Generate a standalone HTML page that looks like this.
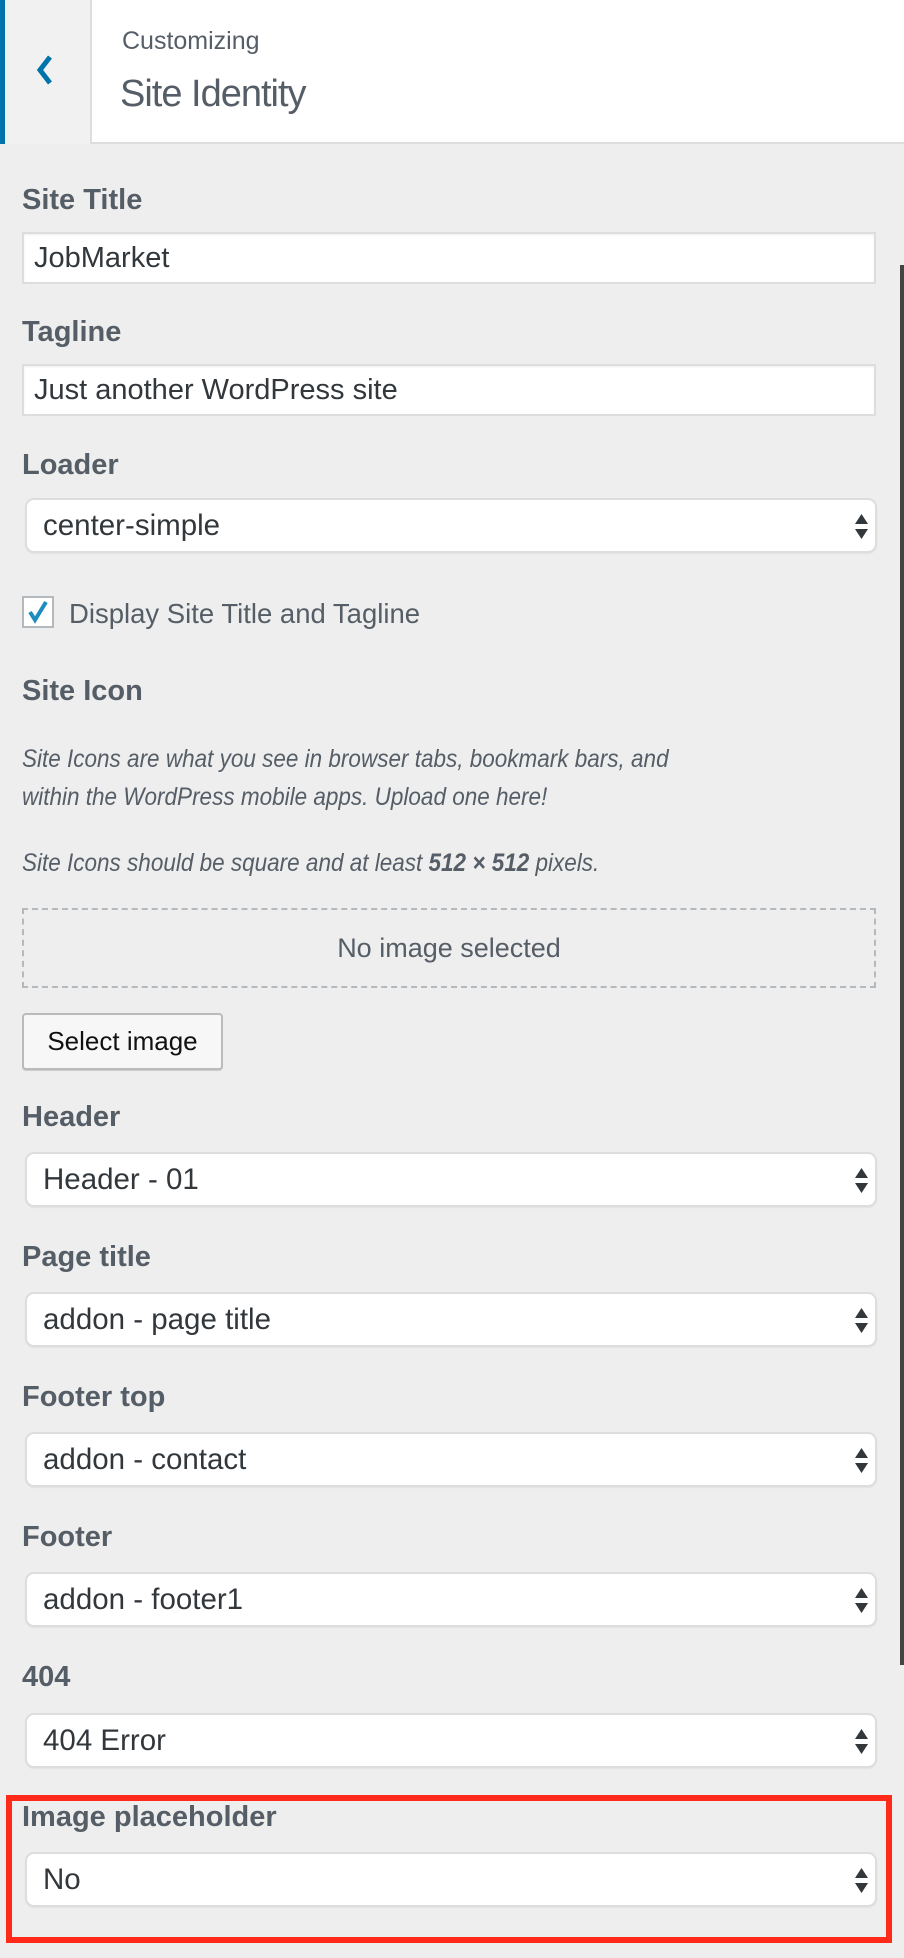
<!DOCTYPE html>
<html><head><meta charset="utf-8"><style>
*{margin:0;padding:0;box-sizing:border-box}
html,body{width:904px;height:1958px;overflow:hidden;background:#eeeeee;font-family:"Liberation Sans",sans-serif}
.a{position:absolute;white-space:nowrap}
.lbl{font-size:29px;font-weight:bold;color:#555d66;line-height:29px;left:22px}
.inp{left:22px;width:854px;height:52px;background:#fff;border:2px solid #ddd;font-size:29px;color:#32373c;line-height:48px;padding-left:10px;box-shadow:inset 0 1px 2px rgba(0,0,0,.07)}
.sel{left:25px;width:852px;height:55px;background:#fff;border:2px solid #ddd;border-radius:9px;font-size:29.5px;color:#32373c;line-height:51px;padding-left:16px;box-shadow:0 1px 1px rgba(0,0,0,.05)}
.arr{position:absolute;right:7px;top:14px;width:13px;height:25px}
.it{font-style:italic;color:#555d66;font-size:25px;transform-origin:0 0;transform:scaleX(0.9)}
</style></head><body>
<div class="a" style="left:0;top:0;width:904px;height:144px;background:#fff;border-bottom:2px solid #ddd"></div>
<div class="a" style="left:0;top:0;width:92px;height:144px;background:#f1f1f1;border-right:2px solid #ddd"></div>
<div class="a" style="left:0;top:0;width:5px;height:144px;background:#0073aa"></div>
<svg class="a" style="left:34px;top:54px" width="22" height="32" viewBox="0 0 22 32"><path d="M16 3 L6 16 L16 29" fill="none" stroke="#0073aa" stroke-width="5"/></svg>
<div class="a" style="left:122px;top:29px;font-size:25px;line-height:25px;color:#555d66">Customizing</div>
<div class="a" style="left:120px;top:75px;font-size:38px;line-height:38px;color:#555d66;font-weight:300;letter-spacing:-1px">Site Identity</div>
<div class="a" style="left:900px;top:265px;width:4px;height:1400px;background:#444"></div>

<div class="a lbl" style="top:186px">Site Title</div>
<div class="a inp" style="top:232px">JobMarket</div>
<div class="a lbl" style="top:318px">Tagline</div>
<div class="a inp" style="top:364px">Just another WordPress site</div>

<div class="a lbl" style="top:451px">Loader</div>
<div class="a sel" style="top:498px">center-simple<svg class="arr" viewBox="0 0 13 25"><path d="M6.5 0 L13 10 L0 10Z M0 15 L13 15 L6.5 25Z" fill="#32373c"/></svg></div>

<div class="a" style="left:22px;top:596px;width:32px;height:32px;background:#fff;border:2px solid #b4b9be"></div>
<svg class="a" style="left:24px;top:598px" width="28" height="28" viewBox="0 0 28 28"><path d="M6 14 L11 22 L22 4" fill="none" stroke="#1e8cbe" stroke-width="4"/></svg>
<div class="a" style="left:69px;top:600px;font-size:27.5px;line-height:27px;color:#555d66">Display Site Title and Tagline</div>

<div class="a lbl" style="top:677px">Site Icon</div>
<div class="a it" style="left:22px;top:740px;line-height:38px">Site Icons are what you see in browser tabs, bookmark bars, and<br>within the WordPress mobile apps. Upload one here!</div>
<div class="a it" style="left:22px;top:851px;line-height:25px">Site Icons should be square and at least <b>512 × 512</b> pixels.</div>
<div class="a" style="left:22px;top:908px;width:854px;height:80px;border:2px dashed #b4b9be;text-align:center;font-size:27px;line-height:76px;color:#555d66">No image selected</div>
<div class="a" style="left:22px;top:1013px;width:201px;height:57px;background:#f7f7f7;border:2px solid #bbb;border-radius:4px;box-shadow:0 1px 0 #ccc;font-size:26px;line-height:53px;color:#111;text-align:center">Select image</div>

<div class="a lbl" style="top:1103px">Header</div>
<div class="a sel" style="top:1152px">Header - 01<svg class="arr" viewBox="0 0 13 25"><path d="M6.5 0 L13 10 L0 10Z M0 15 L13 15 L6.5 25Z" fill="#32373c"/></svg></div>
<div class="a lbl" style="top:1243px">Page title</div>
<div class="a sel" style="top:1292px">addon - page title<svg class="arr" viewBox="0 0 13 25"><path d="M6.5 0 L13 10 L0 10Z M0 15 L13 15 L6.5 25Z" fill="#32373c"/></svg></div>
<div class="a lbl" style="top:1383px">Footer top</div>
<div class="a sel" style="top:1432px">addon - contact<svg class="arr" viewBox="0 0 13 25"><path d="M6.5 0 L13 10 L0 10Z M0 15 L13 15 L6.5 25Z" fill="#32373c"/></svg></div>
<div class="a lbl" style="top:1523px">Footer</div>
<div class="a sel" style="top:1572px">addon - footer1<svg class="arr" viewBox="0 0 13 25"><path d="M6.5 0 L13 10 L0 10Z M0 15 L13 15 L6.5 25Z" fill="#32373c"/></svg></div>
<div class="a lbl" style="top:1663px">404</div>
<div class="a sel" style="top:1713px">404 Error<svg class="arr" viewBox="0 0 13 25"><path d="M6.5 0 L13 10 L0 10Z M0 15 L13 15 L6.5 25Z" fill="#32373c"/></svg></div>

<div class="a" style="left:6px;top:1795px;width:886px;height:148px;border:6px solid #ff2a1a"></div>
<div class="a lbl" style="top:1803px">Image placeholder</div>
<div class="a sel" style="top:1852px">No<svg class="arr" viewBox="0 0 13 25"><path d="M6.5 0 L13 10 L0 10Z M0 15 L13 15 L6.5 25Z" fill="#32373c"/></svg></div>
</body></html>
